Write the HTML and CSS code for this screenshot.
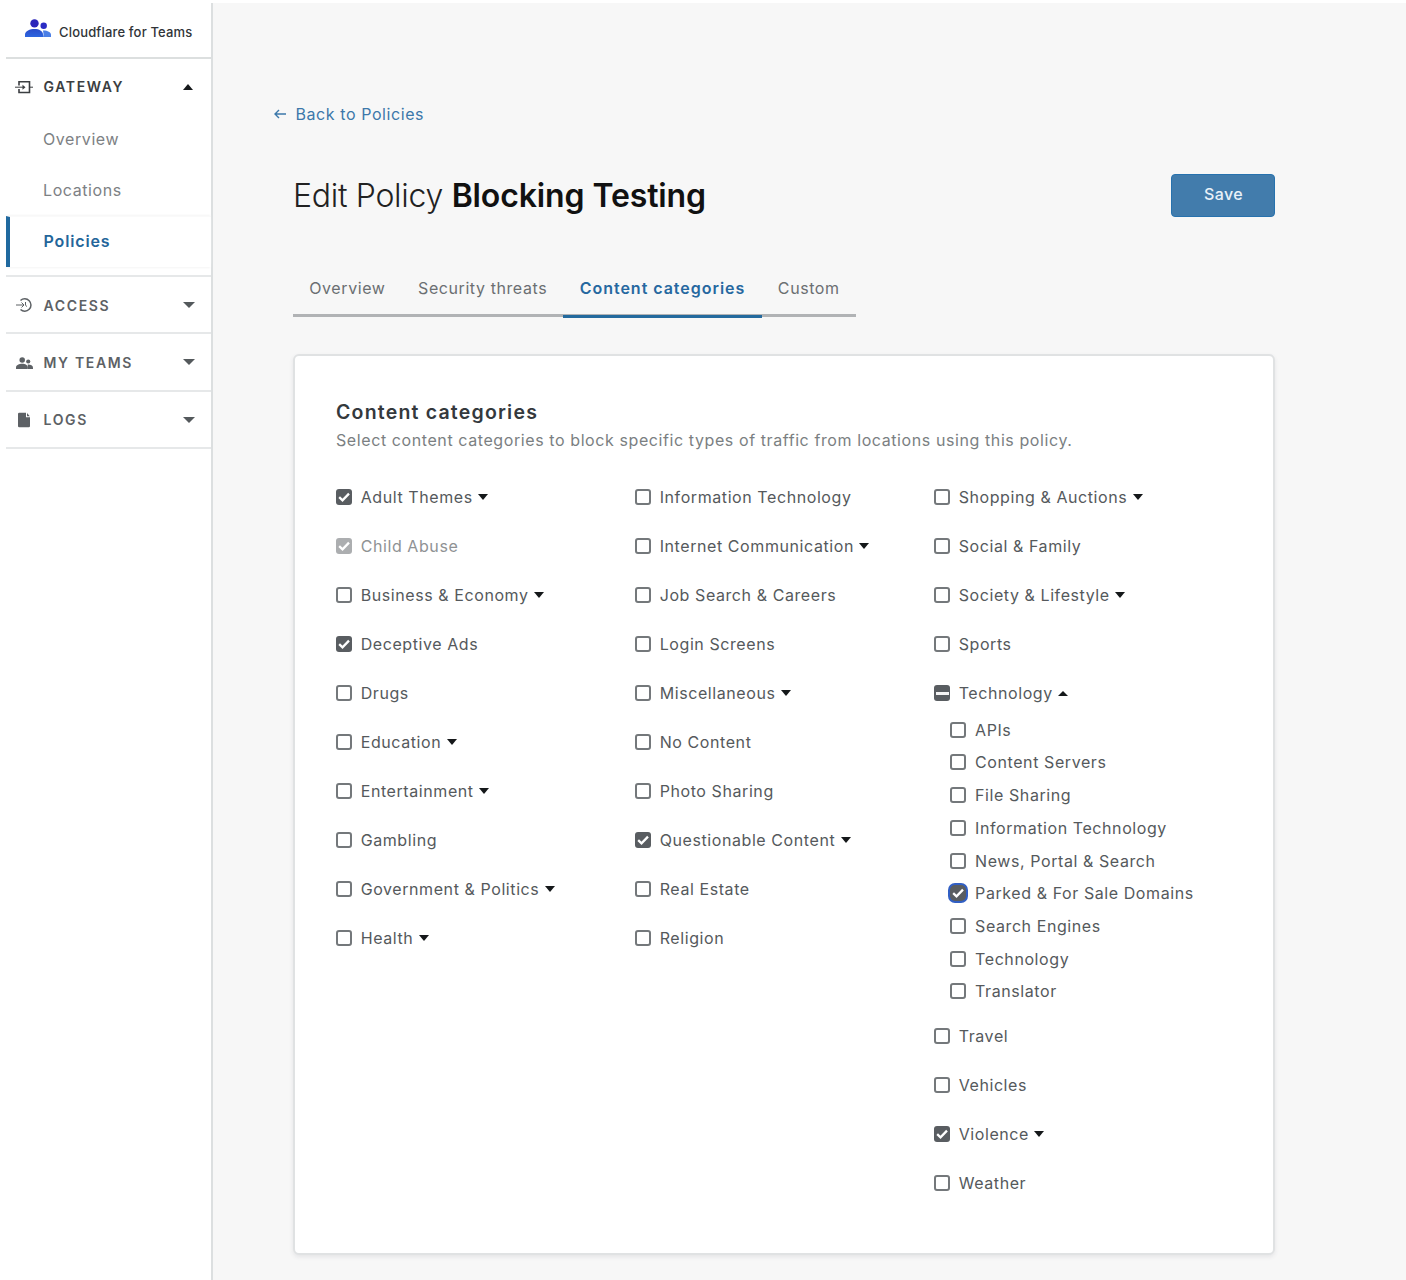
FILE: index.html
```html
<!DOCTYPE html>
<html lang="en">
<head>
<meta charset="utf-8">
<title>Edit Policy</title>
<link rel="stylesheet" href="styles.css">
</head>
<body>
<svg width="0" height="0" class="defs">
  <symbol id="tick" viewBox="0 0 16 16"><path d="M3.2 8.2 6.5 11.3 13 4.6" fill="none" stroke="#fff" stroke-width="2.3"/></symbol>
  <symbol id="people" viewBox="0 0 26 18"><circle cx="9.5" cy="4.4" r="4.2"/><circle cx="18.7" cy="6.7" r="3.2"/><path d="M0 18v-2.500C0 12 5 10 9.500 10S18 12 18 15.500V18z"/><path d="M18 18h8v-2.300c0-2.900-4-4.500-8-4.300z"/></symbol>
</svg>
<div class="app">
  <aside class="sidebar">
    <div class="brand"><svg class="logo" viewBox="0 0 26 18"><defs><linearGradient id="g" x1="0" y1="0" x2="0" y2="1"><stop offset="0" stop-color="#2a4cca"/><stop offset="1" stop-color="#2d66e0"/></linearGradient></defs><circle cx="9.500" cy="4.400" r="4.200" fill="#2a24ba"/><circle cx="18.700" cy="6.700" r="3.200" fill="#2a2bc4"/><path d="M0 18v-2.500C0 12 5 10 9.500 10S18 12 18 15.500V18z" fill="url(#g)"/><path d="M18 18h8v-2.300c0-2.900-4-4.500-8-4.300 0 1 .5 2.400.5 4z" fill="#4b7fe6"/></svg><span class="brand-name">Cloudflare for Teams</span></div>
    <nav>
      <div class="group open">
        <div class="head"><svg class="gi" viewBox="0 0 18 16"><path d="M4 6.500V2.800h10.500v10.700H4v-3.500" fill="none" stroke="currentColor" stroke-width="1.600"/><path d="M0 8.200h9M15 8.200h3" stroke="currentColor" stroke-width="1"/><path d="M7.500 5.700 10.500 8.200 7.500 10.700z" fill="currentColor"/></svg><span>GATEWAY</span><i class="caret up"></i></div>
        <a class="item">Overview</a>
        <a class="item">Locations</a>
        <a class="item active">Policies</a>
      </div>
      <div class="group"><div class="head"><svg class="gi" viewBox="0 0 18 16"><path d="M5.500 3.500A6.200 6.200 0 1 1 5.500 12.500" fill="none" stroke="currentColor" stroke-width="1.500"/><path d="M1 8h8M6.500 5.500 9 8 6.500 10.500M10.500 5v3.300l1.500 1.200" fill="none" stroke="currentColor" stroke-width="1"/></svg><span>ACCESS</span><i class="caret"></i></div></div>
      <div class="group"><div class="head"><svg class="gi" viewBox="0 0 18 16"><use href="#people" x="1" y="3" width="17" height="12" fill="currentColor"/></svg><span>MY TEAMS</span><i class="caret"></i></div></div>
      <div class="group"><div class="head"><svg class="gi" viewBox="0 0 18 16"><path d="M4.200 .800h6.800v4.400h4V14a1.200 1.200 0 0 1-1.200 1.200H4.200A1.200 1.200 0 0 1 3 14V2A1.200 1.200 0 0 1 4.200 .800zM12 1 14.800 4.200h-2.800z" fill="currentColor"/></svg><span>LOGS</span><i class="caret"></i></div></div>
    </nav>
  </aside>
  <main class="main">
    <a class="back"><svg viewBox="0 0 12 12" width="12" height="12"><path d="M12 6H1.200M5 2 1 6l4 4" fill="none" stroke="currentColor" stroke-width="1.400"/></svg><span>Back to Policies</span></a>
    <div class="titlebar"><h1>Edit Policy <b>Blocking Testing</b></h1><button class="save">Save</button></div>
    <div class="tabs"><a class="tab">Overview</a><a class="tab">Security threats</a><a class="tab current">Content categories</a><a class="tab">Custom</a></div>
    <section class="card">
      <h2>Content categories</h2>
      <p>Select content categories to block specific types of traffic from locations using this policy.</p>
      <div class="columns">
        <ul>
          <li><i class="box on"><svg><use href="#tick"/></svg></i><span>Adult Themes</span><i class="arrow"></i></li>
          <li class="disabled"><i class="box on"><svg><use href="#tick"/></svg></i><span>Child Abuse</span></li>
          <li><i class="box"></i><span>Business &amp; Economy</span><i class="arrow"></i></li>
          <li><i class="box on"><svg><use href="#tick"/></svg></i><span>Deceptive Ads</span></li>
          <li><i class="box"></i><span>Drugs</span></li>
          <li><i class="box"></i><span>Education</span><i class="arrow"></i></li>
          <li><i class="box"></i><span>Entertainment</span><i class="arrow"></i></li>
          <li><i class="box"></i><span>Gambling</span></li>
          <li><i class="box"></i><span>Government &amp; Politics</span><i class="arrow"></i></li>
          <li><i class="box"></i><span>Health</span><i class="arrow"></i></li>
        </ul>
        <ul>
          <li><i class="box"></i><span>Information Technology</span></li>
          <li><i class="box"></i><span>Internet Communication</span><i class="arrow"></i></li>
          <li><i class="box"></i><span>Job Search &amp; Careers</span></li>
          <li><i class="box"></i><span>Login Screens</span></li>
          <li><i class="box"></i><span>Miscellaneous</span><i class="arrow"></i></li>
          <li><i class="box"></i><span>No Content</span></li>
          <li><i class="box"></i><span>Photo Sharing</span></li>
          <li><i class="box on"><svg><use href="#tick"/></svg></i><span>Questionable Content</span><i class="arrow"></i></li>
          <li><i class="box"></i><span>Real Estate</span></li>
          <li><i class="box"></i><span>Religion</span></li>
        </ul>
        <ul>
          <li><i class="box"></i><span>Shopping &amp; Auctions</span><i class="arrow"></i></li>
          <li><i class="box"></i><span>Social &amp; Family</span></li>
          <li><i class="box"></i><span>Society &amp; Lifestyle</span><i class="arrow"></i></li>
          <li><i class="box"></i><span>Sports</span></li>
          <li><i class="box mixed"></i><span>Technology</span><i class="arrow up"></i></li>
          <li class="nested">
            <ul>
              <li><i class="box"></i><span>APIs</span></li>
              <li><i class="box"></i><span>Content Servers</span></li>
              <li><i class="box"></i><span>File Sharing</span></li>
              <li><i class="box"></i><span>Information Technology</span></li>
              <li><i class="box"></i><span>News, Portal &amp; Search</span></li>
              <li><i class="box on focus"><svg><use href="#tick"/></svg></i><span>Parked &amp; For Sale Domains</span></li>
              <li><i class="box"></i><span>Search Engines</span></li>
              <li><i class="box"></i><span>Technology</span></li>
              <li><i class="box"></i><span>Translator</span></li>
            </ul>
          </li>
          <li><i class="box"></i><span>Travel</span></li>
          <li><i class="box"></i><span>Vehicles</span></li>
          <li><i class="box on"><svg><use href="#tick"/></svg></i><span>Violence</span><i class="arrow"></i></li>
          <li><i class="box"></i><span>Weather</span></li>
        </ul>
      </div>
    </section>
  </main>
</div>
</body>
</html>
```
FILE: styles.css
```css
* { box-sizing: border-box; }
body { margin: 0; background: #fff; font-family: Inter, "Liberation Sans", sans-serif; font-size: 16px; letter-spacing: .58px; color: #55595c; }
.defs { display: block; position: absolute; }
.app { display: flex; height: 1280px; padding: 3px 0 0 6px; overflow: hidden; }
.sidebar { width: 207px; flex: none; border-right: 2px solid #dcdfe0; background: #fff; }
.brand { height: 56px; display: flex; align-items: center; padding-left: 19px; border-bottom: 2px solid #dcdfdf; gap: 8px; }
.logo { width: 26px; height: 18px; margin-top: -5px; }
.brand-name { font-size: 13px; font-weight: 500; letter-spacing: .17px; color: #303438; padding-top: 3px; white-space: nowrap; }
.group { height: 57.300px; border-bottom: 2px solid #e6e8e9; }
.group.open { height: 218px; }
.head { height: 56px; display: flex; align-items: center; padding: 0 16px 0 9px; color: #5d6165; font-size: 14px; font-weight: 600; letter-spacing: 1.650px; }
.head .gi { width: 18px; height: 16px; margin-right: 10.500px; }
.open .head { color: #3b3e41; height: 55px; }
.caret { margin-left: auto; border: 6.500px solid transparent; border-top: 6px solid #54595c; border-bottom: 0; }
.caret.up { border: 5.500px solid transparent; border-bottom: 6px solid #16191b; border-top: 0; margin-right: 2px; }
.item { display: flex; align-items: center; height: 51px; padding: 0 0 1px 37px; color: #7d8184; }
.item.active { padding: 0 0 2px 33.500px; border-left: 4px solid #20699f; color: #24659a; font-weight: 600; letter-spacing: .850px; border-top: 1px solid #fafafa; box-shadow: 0 -2px 2px -1px #f5f5f5, 0 2px 2px -1px #f5f5f5; }
.main { flex: 1; background: #f7f7f7; padding: 99px 131px 0 80px; }
.back { display: flex; align-items: center; height: 24px; margin-left: -19px; gap: 9.500px; color: #3c78aa; }
.titlebar { display: flex; justify-content: space-between; align-items: center; height: 44px; margin-top: 47px; }
h1 { margin: 0; padding-top: 1px; font-size: 32px; line-height: 44px; font-weight: 300; letter-spacing: -.300px; color: #222; }
h1 b { font-weight: 600; letter-spacing: -.120px; color: #111; }
.save { width: 104px; height: 43px; border: 1px solid #2772ae; border-radius: 4px; background: #427cac; color: #e9f1f8; font: 500 16px Inter, sans-serif; letter-spacing: .4px; padding: 0 0 2px 1px; }
.tabs { display: flex; width: 563px; height: 56px; margin-top: 44px; border-bottom: 3px solid #b1b3b5; }
.tab { height: 57px; padding: 15px 16.300px 0; line-height: 24px; color: #6b6f72; white-space: nowrap; }
.tab.current { border-bottom: 3px solid #246a9e; color: #2668a0; font-weight: 600; letter-spacing: .970px; }
.card { width: 982px; height: 901px; margin-top: 37px; padding: 44px 41px 0; background: #fff; border: 2px solid #e0e2e3; border-radius: 6px; box-shadow: 0 2px 4px #e4e4e6; }
h2 { margin: 0; font-size: 19.500px; line-height: 24px; font-weight: 600; letter-spacing: 1.200px; color: #34393d; }
.card p { margin: 4px 0 0; line-height: 24px; letter-spacing: .590px; color: #7b7f82; white-space: nowrap; }
.columns { display: grid; grid-template-columns: 299px 299px 1fr; margin-top: 20.500px; }
ul { list-style: none; margin: 0; padding: 0; }
li { height: 49.060px; display: flex; align-items: center; white-space: nowrap; }
.box { width: 16px; height: 16px; margin-right: 8.700px; flex: none; border: 2px solid #74787b; border-radius: 3px; }
.box.on, .box.mixed { border: 0; background: #595d61; }
.box svg { display: block; width: 16px; height: 16px; }
.box.mixed { background: linear-gradient(#f4f4f4, #f4f4f4) center / 13px 3px no-repeat #595d61; }
.box.focus { border-radius: 5px; box-shadow: 0 0 0 2px #315fc4; }
.disabled { color: #8f9294; }
.disabled .box { background: #acaeb0; }
.arrow { margin-left: 5.300px; border: 5px solid transparent; border-top: 6px solid #15181a; border-bottom: 0; }
.arrow.up { border: 5px solid transparent; border-bottom: 5px solid #15181a; border-top: 0; }
.nested { display: block; height: auto; margin: -4.300px 0 3.800px; padding-left: 16.400px; }
.nested li { height: 32.700px; }
```
